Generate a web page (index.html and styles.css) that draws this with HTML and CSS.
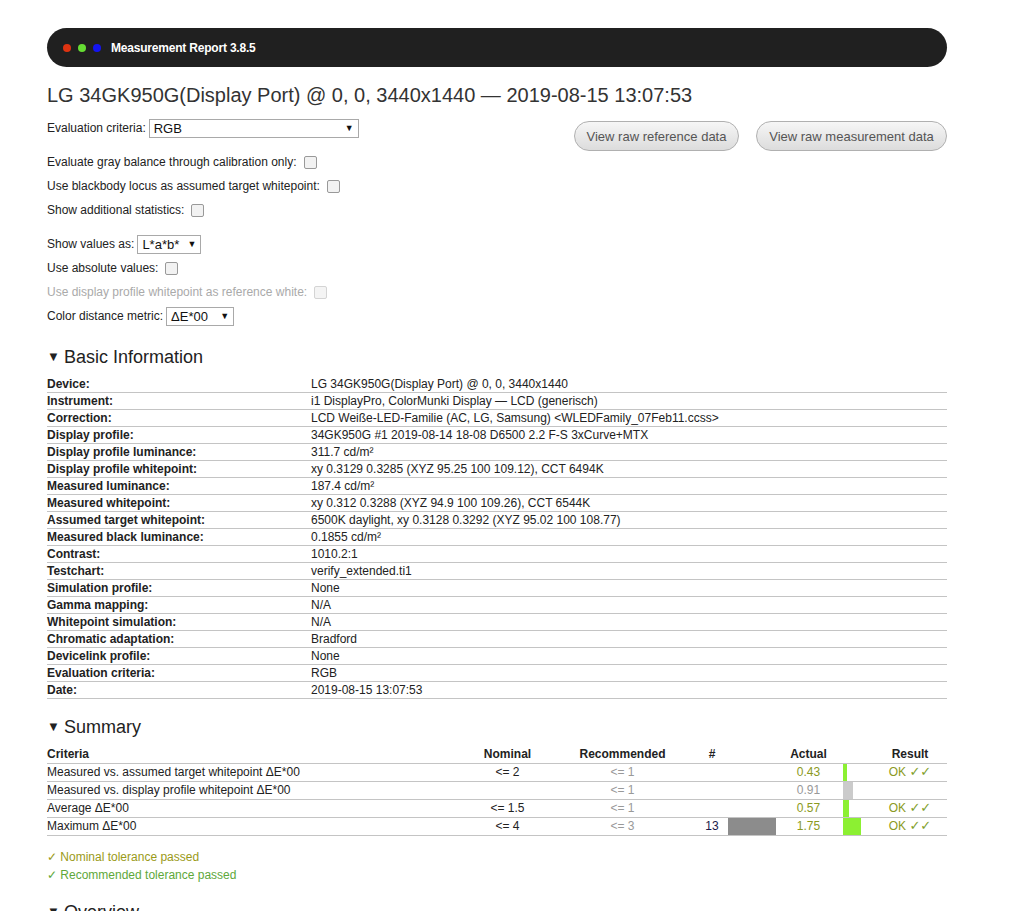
FILE: index.html
```html
<!DOCTYPE html>
<html>
<head>
<meta charset="utf-8">
<link rel="stylesheet" href="styles.css">
</head>
<body>
<div class="page">
  <div class="topbar">
    <span class="dot red"></span><span class="dot green"></span><span class="dot blue"></span>
    <span class="topbar-title">Measurement Report 3.8.5</span>
  </div>
  <h1 class="title">LG 34GK950G(Display Port) @ 0, 0, 3440x1440 — 2019-08-15 13:07:53</h1>

  <div class="settings">
    <div class="options">
      <div class="row"><span>Evaluation criteria:</span><span class="select sel-eval">RGB<span class="arrow">▼</span></span></div>
      <div class="group">
        <div class="row"><span>Evaluate gray balance through calibration only:</span><span class="check"></span></div>
        <div class="row"><span>Use blackbody locus as assumed target whitepoint:</span><span class="check"></span></div>
        <div class="row"><span>Show additional statistics:</span><span class="check"></span></div>
      </div>
      <div class="group">
        <div class="row"><span>Show values as:</span><span class="select sel-small">L*a*b*<span class="arrow">▼</span></span></div>
        <div class="row"><span>Use absolute values:</span><span class="check"></span></div>
        <div class="row disabled"><span>Use display profile whitepoint as reference white:</span><span class="check"></span></div>
        <div class="row"><span>Color distance metric:</span><span class="select sel-metric">ΔE*00<span class="arrow">▼</span></span></div>
      </div>
    </div>
    <div class="buttons">
      <span class="btn btn-ref">View raw reference data</span>
      <span class="btn btn-meas">View raw measurement data</span>
    </div>
  </div>

  <h2 class="section"><span class="tri">▼</span>Basic Information</h2>
  <table class="info">
    <tr><th>Device:</th><td>LG 34GK950G(Display Port) @ 0, 0, 3440x1440</td></tr>
    <tr><th>Instrument:</th><td>i1 DisplayPro, ColorMunki Display — LCD (generisch)</td></tr>
    <tr><th>Correction:</th><td>LCD Weiße-LED-Familie (AC, LG, Samsung) &lt;WLEDFamily_07Feb11.ccss&gt;</td></tr>
    <tr><th>Display profile:</th><td>34GK950G #1 2019-08-14 18-08 D6500 2.2 F-S 3xCurve+MTX</td></tr>
    <tr><th>Display profile luminance:</th><td>311.7 cd/m²</td></tr>
    <tr><th>Display profile whitepoint:</th><td>xy 0.3129 0.3285 (XYZ 95.25 100 109.12), CCT 6494K</td></tr>
    <tr><th>Measured luminance:</th><td>187.4 cd/m²</td></tr>
    <tr><th>Measured whitepoint:</th><td>xy 0.312 0.3288 (XYZ 94.9 100 109.26), CCT 6544K</td></tr>
    <tr><th>Assumed target whitepoint:</th><td>6500K daylight, xy 0.3128 0.3292 (XYZ 95.02 100 108.77)</td></tr>
    <tr><th>Measured black luminance:</th><td>0.1855 cd/m²</td></tr>
    <tr><th>Contrast:</th><td>1010.2:1</td></tr>
    <tr><th>Testchart:</th><td>verify_extended.ti1</td></tr>
    <tr><th>Simulation profile:</th><td>None</td></tr>
    <tr><th>Gamma mapping:</th><td>N/A</td></tr>
    <tr><th>Whitepoint simulation:</th><td>N/A</td></tr>
    <tr><th>Chromatic adaptation:</th><td>Bradford</td></tr>
    <tr><th>Devicelink profile:</th><td>None</td></tr>
    <tr><th>Evaluation criteria:</th><td>RGB</td></tr>
    <tr><th>Date:</th><td>2019-08-15 13:07:53</td></tr>
  </table>

  <h2 class="section summary-h"><span class="tri">▼</span>Summary</h2>
  <table class="summary">
    <colgroup>
      <col class="c-crit"><col class="c-nom"><col class="c-rec"><col class="c-num"><col class="c-bar"><col class="c-act"><col class="c-abar"><col class="c-res">
    </colgroup>
    <tr class="head"><th class="left">Criteria</th><th>Nominal</th><th>Recommended</th><th>#</th><th></th><th>Actual</th><th></th><th>Result</th></tr>
    <tr><td class="left">Measured vs. assumed target whitepoint ΔE*00</td><td>&lt;= 2</td><td class="rec">&lt;= 1</td><td></td><td></td><td class="ok">0.43</td><td class="abar"><span class="bar green" style="width:4px"></span></td><td class="ok">OK <span class="ticks">✓✓</span></td></tr>
    <tr><td class="left">Measured vs. display profile whitepoint ΔE*00</td><td></td><td class="rec">&lt;= 1</td><td></td><td></td><td class="gray">0.91</td><td class="abar"><span class="bar lightgray" style="width:10px"></span></td><td></td></tr>
    <tr><td class="left">Average ΔE*00</td><td>&lt;= 1.5</td><td class="rec">&lt;= 1</td><td></td><td></td><td class="ok">0.57</td><td class="abar"><span class="bar green" style="width:6px"></span></td><td class="ok">OK <span class="ticks">✓✓</span></td></tr>
    <tr><td class="left">Maximum ΔE*00</td><td>&lt;= 4</td><td class="rec">&lt;= 3</td><td class="num">13</td><td class="pbar"><span class="bar dark"></span></td><td class="ok">1.75</td><td class="abar"><span class="bar green" style="width:18px"></span></td><td class="ok">OK <span class="ticks">✓✓</span></td></tr>
  </table>

  <div class="passed nominal">✓ Nominal tolerance passed</div>
  <div class="passed recommended">✓ Recommended tolerance passed</div>

  <h2 class="section overview-h"><span class="tri">▼</span>Overview</h2>
</div>
</body>
</html>
```

FILE: styles.css
```css
html, body {
  margin: 0;
  padding: 0;
  background: #fff;
}
body {
  font-family: "Liberation Sans", Arial, sans-serif;
  font-size: 12px;
  color: #222;
}
.page {
  width: 900px;
  padding: 28px 0 0 47px;
}
.topbar {
  height: 39px;
  background: #202020;
  border-radius: 20px;
  display: flex;
  align-items: center;
  padding-left: 16px;
}
.dot {
  width: 8px;
  height: 8px;
  border-radius: 50%;
  margin-right: 7px;
}
.dot.red { background: #dd3311; }
.dot.green { background: #66dd33; }
.dot.blue { background: #1414f0; }
.topbar-title {
  color: #fff;
  font-weight: bold;
  font-size: 12px;
  margin-left: 3px;
  letter-spacing: -0.2px;
}
.title {
  font-size: 20px;
  font-weight: normal;
  color: #333;
  margin: 16px 0 0;
  line-height: 24px;
}
.settings {
  display: flex;
  justify-content: space-between;
  align-items: flex-start;
  margin-top: 9px;
}
.options {
  display: flex;
  flex-direction: column;
  font-size: 12px;
}
.row {
  display: flex;
  align-items: center;
  height: 24px;
}
.group {
  margin-top: 10px;
}
.row.disabled {
  color: #aaa;
}
.row.disabled .check {
  border-color: #d4d4d4;
  background: #f4f4f4;
}
.check {
  display: inline-block;
  width: 11px;
  height: 11px;
  border: 1px solid #999;
  border-radius: 2px;
  background: #f2f2f2;
  margin-left: 7px;
}
.select {
  display: inline-flex;
  align-items: center;
  justify-content: space-between;
  height: 17px;
  border: 1px solid #a9a9a9;
  font-size: 13px;
  color: #111;
  padding: 0 4px;
  margin-left: 3px;
  box-sizing: content-box;
}
.select .arrow {
  font-size: 9px;
  margin-left: 8px;
}
.sel-eval { width: 200px; }
.sel-small { width: 54px; }
.sel-metric { width: 58px; }
.buttons {
  display: flex;
  gap: 17px;
  margin-top: 5px;
}
.btn {
  display: inline-flex;
  align-items: center;
  justify-content: center;
  height: 28px;
  border: 1px solid #b0b0b0;
  border-radius: 15px;
  background: linear-gradient(#f6f6f6, #dcdcdc);
  color: #555;
  font-size: 13px;
  box-sizing: border-box;
}
.btn-ref { width: 165px; height: 30px; }
.btn-meas { width: 191px; height: 30px; }
.section {
  font-size: 18px;
  font-weight: normal;
  color: #222;
  margin: 17px 0 0;
  line-height: 24px;
  height: 24px;
}
.tri {
  font-size: 13px;
  line-height: 0;
  vertical-align: 2px;
  margin-right: 4px;
}
table {
  border-collapse: collapse;
  width: 900px;
}
.info {
  margin-top: 7px;
  table-layout: fixed;
}
.info th {
  width: 264px;
  text-align: left;
  font-weight: bold;
}
.info th, .info td {
  padding: 0;
  height: 16px;
  line-height: 16px;
  border-bottom: 1px solid #c4c4c4;
  white-space: nowrap;
}
.summary-h {
  margin-top: 16px;
}
.summary {
  margin-top: 7px;
  table-layout: fixed;
}
.c-crit { width: 423px; }
.c-nom { width: 75px; }
.c-rec { width: 155px; }
.c-num { width: 24px; }
.c-bar { width: 58px; }
.c-act { width: 53px; }
.c-abar { width: 38px; }
.c-res { width: 74px; }
.summary th, .summary td {
  padding: 0;
  height: 17px;
  line-height: 17px;
  text-align: center;
  border-bottom: 1px solid #c4c4c4;
  white-space: nowrap;
  vertical-align: middle;
}
.summary th { font-weight: bold; }
.summary .left { text-align: left; }
.summary td.rec { color: #999; }
.summary td.ok { color: #8b9a22; }
.summary td.gray { color: #999; }
.summary td.num { color: #1a1a4a; }
.ticks {
  font-family: "DejaVu Sans", sans-serif;
  font-size: 13px;
  line-height: 10px;
  color: #7fa02a;
}
.summary td.abar, .summary td.pbar {
  text-align: left;
  padding: 0;
  line-height: 0;
}
.bar {
  display: block;
  height: 17px;
}
.abar .bar { margin-left: 8px; }
.pbar .bar.dark {
  margin-left: 4px;
  width: 48px;
  background: #8c8c8c;
}
.bar.green { background: #8cf032; }
.bar.lightgray { background: #cbcbcb; }
.passed {
  margin-top: 0;
  line-height: 18px;
}
.nominal {
  color: #9a9a18;
  margin-top: 12px;
}
.recommended { color: #5ea83a; }
.overview-h {
  margin-top: 16px;
}
```
